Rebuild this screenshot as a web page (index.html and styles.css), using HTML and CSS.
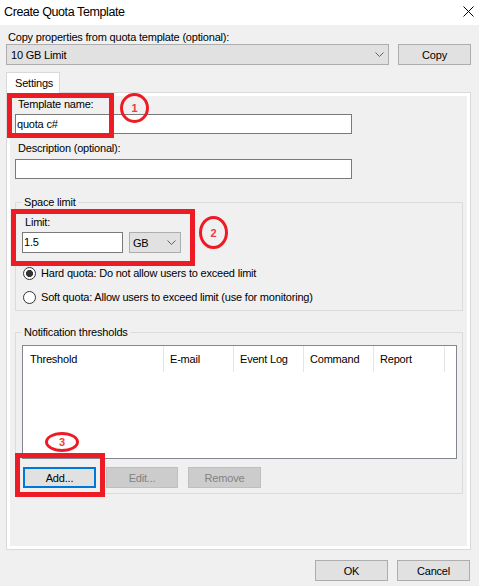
FILE: index.html
```html
<!DOCTYPE html>
<html lang="en">
<head>
  <meta charset="UTF-8">
  <title>Create Quota Template</title>
  <link rel="stylesheet" href="styles.css">
</head>
<body>

  <div class="titlebar">
      <span class="title">Create Quota Template</span>
      <svg class="close" width="11" height="11" viewBox="0 0 11 11">
          <path d="M0.5 0.5 L10.5 10.5 M10.5 0.5 L0.5 10.5" stroke="#000" stroke-width="1" fill="none"/>
      </svg>
  </div>

  <div class="dialog">
      <div class="label copy-label">Copy properties from quota template (optional):</div>
      <div class="copy-row">
          <div class="combo combo-template">
              <span>10 GB Limit</span>
              <svg class="chevron" width="9" height="5" viewBox="0 0 9 5"><path d="M0.5 0.5 L4.5 4.5 L8.5 0.5" stroke="#606060" fill="none"/></svg>
          </div>
          <button class="btn">Copy</button>
      </div>

      <div class="tabs">
          <div class="tab">Settings</div>
      </div>

      <div class="panel">
          <div class="panel-inner">
              <div class="label field-label">Template name:</div>
              <div class="textbox wide">quota c#</div>

              <div class="label field-label desc-label">Description (optional):</div>
              <div class="textbox wide desc-box"></div>

              <fieldset class="group space-group">
                  <legend>Space limit</legend>
                  <div class="label limit-label">Limit:</div>
                  <div class="limit-row">
                      <div class="textbox limit-box">1.5</div>
                      <div class="combo combo-unit">
                          <span>GB</span>
                          <svg class="chevron" width="9" height="5" viewBox="0 0 9 5"><path d="M0.5 0.5 L4.5 4.5 L8.5 0.5" stroke="#606060" fill="none"/></svg>
                      </div>
                  </div>
                  <div class="radio-row first">
                      <span class="radio checked"></span>
                      <span>Hard quota: Do not allow users to exceed limit</span>
                  </div>
                  <div class="radio-row">
                      <span class="radio"></span>
                      <span>Soft quota: Allow users to exceed limit (use for monitoring)</span>
                  </div>
              </fieldset>

              <fieldset class="group notify-group">
                  <legend>Notification thresholds</legend>
                  <div class="listview">
                      <div class="list-header">
                          <div class="col col-threshold">Threshold</div>
                          <div class="col">E-mail</div>
                          <div class="col">Event Log</div>
                          <div class="col">Command</div>
                          <div class="col col-report">Report</div>
                      </div>
                  </div>
                  <div class="list-buttons">
                      <button class="btn default">Add...</button>
                      <button class="btn disabled btn-edit">Edit...</button>
                      <button class="btn disabled">Remove</button>
                  </div>
              </fieldset>
          </div>
      </div>

      <div class="footer">
          <button class="btn">OK</button>
          <button class="btn">Cancel</button>
      </div>
  </div>

  <!-- annotations drawn over the dialog -->
  <div class="mark box box-1"></div>
  <div class="mark box box-2"></div>
  <div class="mark box box-3"></div>
  <div class="mark ring ring-1">1</div>
  <div class="mark ring ring-2">2</div>
  <div class="mark ring ring-3">3</div>

</body>
</html>
```

FILE: styles.css
```css
* {
  margin: 0;
  padding: 0;
  box-sizing: border-box;
}

body {
  font-family: "Liberation Sans", Arial, sans-serif;
  font-size: 11px;
  letter-spacing: -0.2px;
  color: #000;
  background-color: #f0f0f0;
  width: 479px;
  height: 586px;
  overflow: hidden;
  position: relative;
}

.titlebar {
  height: 25px;
  background-color: #fff;
  display: flex;
  align-items: center;
  justify-content: space-between;
  padding: 0 5px 1px 4px;
}

.title {
  font-size: 12.5px;
  letter-spacing: -0.4px;
}

.close {
  margin-top: -2px;
}

.dialog {
  padding: 0 8px 0 6px;
}

.label {
  height: 14px;
  line-height: 14px;
  white-space: nowrap;
}

.copy-label {
  margin-top: 5px;
  padding-left: 2px;
}

.copy-row {
  display: flex;
  gap: 9px;
}

.combo {
  height: 21px;
  background-color: #e1e1e1;
  border: 1px solid #adadad;
  display: flex;
  align-items: center;
  justify-content: space-between;
}

.combo-template {
  flex: 1;
  padding: 0 4px 0 4px;
}

.combo-unit {
  width: 52px;
  padding: 0 4px 0 3px;
}

.btn {
  font-family: inherit;
  font-size: 11px;
  letter-spacing: -0.2px;
  color: #000;
  width: 73px;
  height: 21px;
  background-color: #e1e1e1;
  border: 1px solid #adadad;
}

.btn.default {
  border: 2px solid #0078d7;
}

.btn.disabled {
  background-color: #cccccc;
  border-color: #bfbfbf;
  color: #838383;
}

.tabs {
  display: flex;
  margin-top: 7px;
  margin-bottom: -1px;
  position: relative;
}

.tab {
  width: 54px;
  height: 21px;
  line-height: 20px;
  padding-left: 8px;
  background-color: #fff;
  border: 1px solid #d9d9d9;
  border-bottom: none;
}

.panel {
  height: 458px;
  border: 1px solid #d9d9d9;
}

.panel-inner {
  height: 100%;
  border: 3px solid #fff;
  padding: 1px 0 0 5px;
}

.field-label {
  padding-left: 3px;
}

.textbox {
  height: 20px;
  line-height: 18px;
  background-color: #fff;
  border: 1px solid #7a7a7a;
  padding-left: 1px;
}

.wide {
  width: 337px;
  margin-top: 3px;
}

.desc-label {
  margin-top: 7px;
}

.desc-box {
  margin-top: 4px;
}

.group {
  width: 448px;
  border: 1px solid #dcdcdc;
  padding: 0 5px 5px 6px;
  min-width: 0;
}

.group legend {
  padding: 0 2px;
  line-height: 14px;
}

.space-group {
  margin-top: 16px;
}

.limit-label {
  margin-top: 6px;
  padding-left: 3px;
}

.limit-row {
  display: flex;
  gap: 6px;
  margin-top: 3px;
}

.limit-box {
  width: 101px;
  height: 21px;
  line-height: 19px;
}

.radio-row {
  display: flex;
  align-items: center;
  gap: 5px;
  height: 16px;
  margin-top: 8px;
  padding-left: 1px;
}

.radio-row.first {
  margin-top: 12px;
}

.radio {
  width: 13px;
  height: 13px;
  border: 1px solid #333;
  border-radius: 50%;
  background-color: #fff;
}

.radio.checked {
  background: radial-gradient(circle, #333 0, #333 3.3px, #fff 3.8px);
}

.notify-group {
  margin-top: 14px;
}

.listview {
  width: 435px;
  height: 114px;
  margin-top: 6px;
  background-color: #fff;
  border: 1px solid #828790;
}

.list-header {
  display: flex;
  height: 26px;
}

.col {
  width: 70px;
  line-height: 26px;
  padding-left: 6px;
  border-right: 1px solid #e5e5e5;
  white-space: nowrap;
}

.col-threshold {
  width: 141px;
  padding-left: 7px;
}

.col-report {
  width: 71px;
}

.list-buttons {
  display: flex;
  gap: 10px;
  margin-top: 8px;
  padding-left: 1px;
}

.btn-edit {
  width: 72px;
}

.footer {
  display: flex;
  justify-content: flex-end;
  gap: 9px;
  margin-top: 10px;
  padding-right: 1px;
}

/* red annotation marks */
.mark {
  position: absolute;
}

.box {
  border: 5px solid #ed1c24;
}

.box-1 { left: 7px; top: 93px; width: 107px; height: 45px; }
.box-2 { left: 11px; top: 209px; width: 184px; height: 57px; }
.box-3 { left: 15px; top: 453px; width: 90px; height: 44px; }

.ring {
  border: 3px solid #ed1c24;
  border-radius: 50%;
  display: flex;
  align-items: center;
  justify-content: center;
  color: #ec3a44;
  font-weight: bold;
  font-size: 11px;
  letter-spacing: 0;
}

.ring-1 { left: 120px; top: 93px; width: 29px; height: 30px; }
.ring-2 { left: 199px; top: 216px; width: 29px; height: 33px; }
.ring-3 { left: 45px; top: 432px; width: 34px; height: 20px; }
```
